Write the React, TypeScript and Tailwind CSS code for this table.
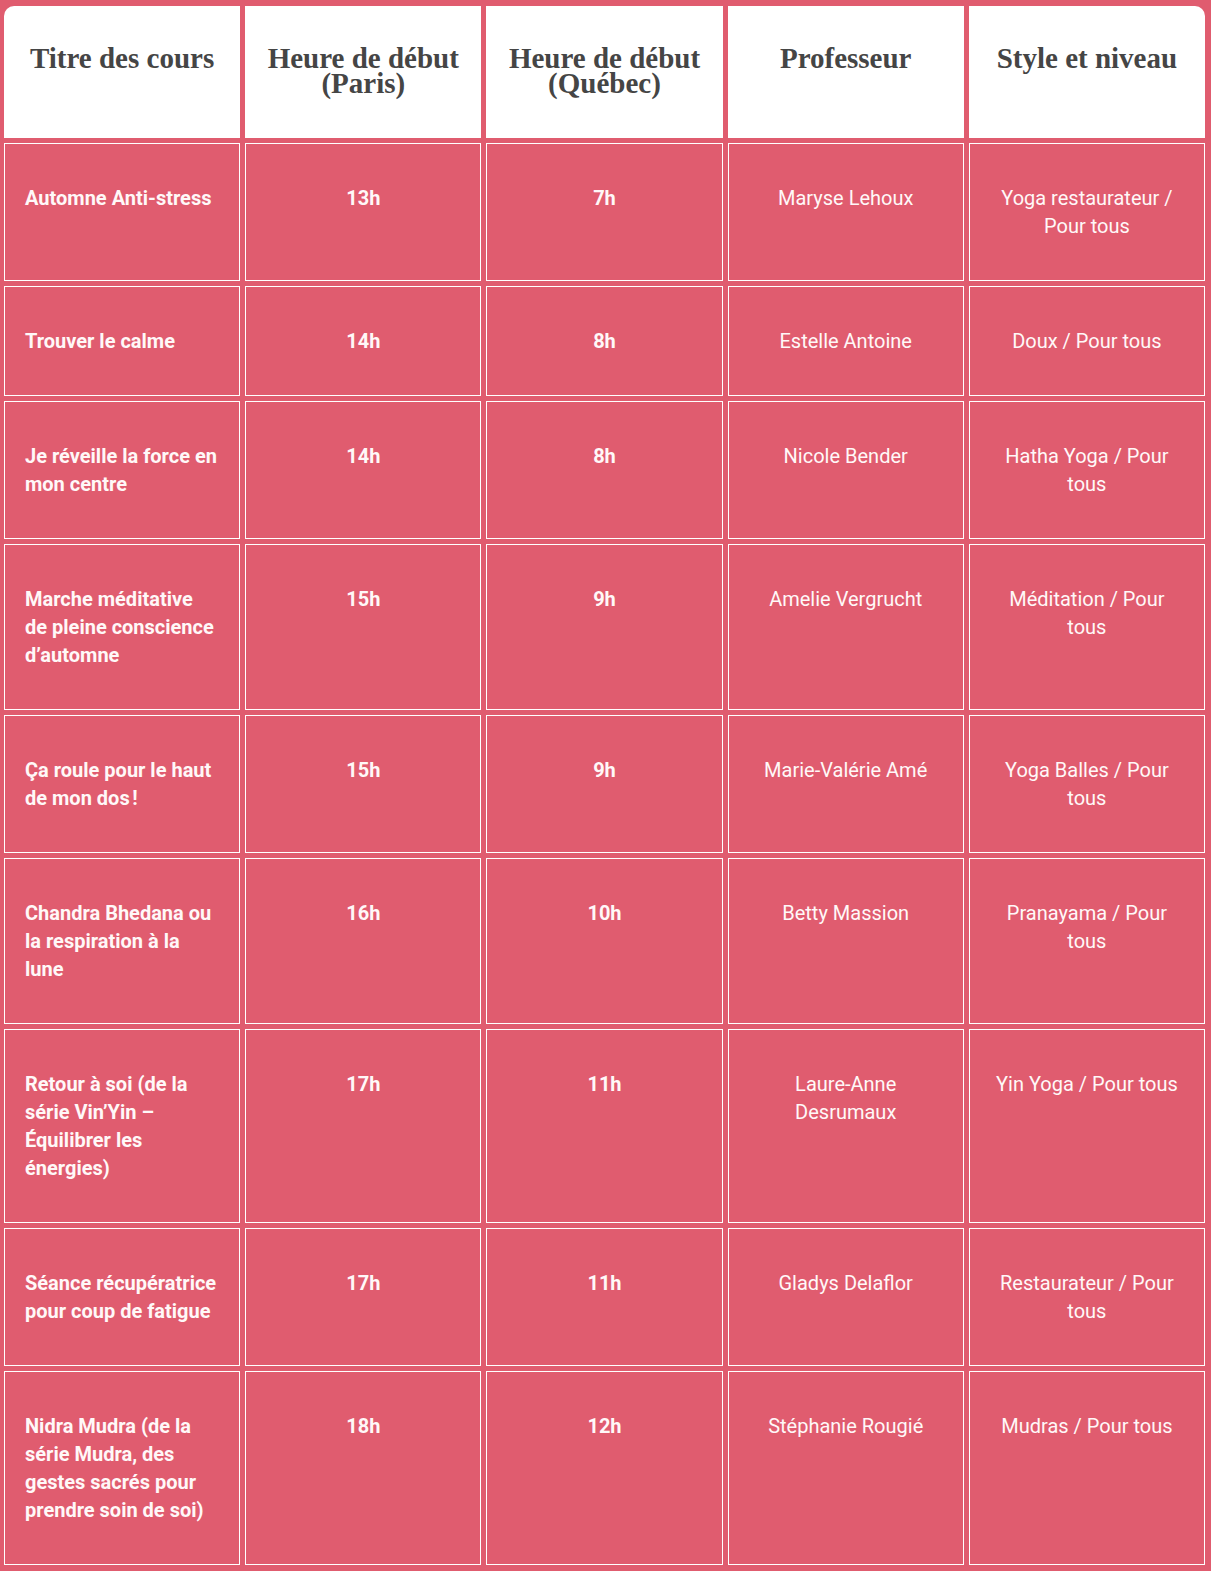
import React from "react";

const headers = [
  "Titre des cours",
  "Heure de début (Paris)",
  "Heure de début (Québec)",
  "Professeur",
  "Style et niveau",
];

const rows = [
  ["Automne Anti-stress", "13h", "7h", "Maryse Lehoux", "Yoga restaurateur / Pour tous"],
  ["Trouver le calme", "14h", "8h", "Estelle Antoine", "Doux / Pour tous"],
  ["Je réveille la force en mon centre", "14h", "8h", "Nicole Bender", "Hatha Yoga / Pour tous"],
  ["Marche méditative de pleine conscience d’automne", "15h", "9h", "Amelie Vergrucht", "Méditation / Pour tous"],
  ["Ça roule pour le haut de mon dos\u202f!", "15h", "9h", "Marie-Valérie Amé", "Yoga Balles / Pour tous"],
  ["Chandra Bhedana ou la respiration à la lune", "16h", "10h", "Betty Massion", "Pranayama / Pour tous"],
  ["Retour à soi (de la série Vin’Yin – Équilibrer les énergies)", "17h", "11h", "Laure-Anne Desrumaux", "Yin Yoga / Pour tous"],
  ["Séance récupératrice pour coup de fatigue", "17h", "11h", "Gladys Delaflor", "Restaurateur / Pour tous"],
  ["Nidra Mudra (de la série Mudra, des gestes sacrés pour prendre soin de soi)", "18h", "12h", "Stéphanie Rougié", "Mudras / Pour tous"],
];

export default function App() {
  return (
    <div className="min-h-screen bg-[#e05c6f] pt-[6px] pl-[4px] pr-[6px] pb-[6px]">
      <div className="grid grid-cols-5 gap-[5px]">
        {headers.map((h, i) => (
          <div
            key={h}
            className={`bg-white h-[132px] px-3 pt-[40px] text-center text-[29px] leading-[25px] font-bold text-[#454545] font-['Liberation_Serif',serif] ${
              i === 0 ? "rounded-tl-[10px]" : ""
            } ${i === 4 ? "rounded-tr-[10px]" : ""}`}
          >
            {h}
          </div>
        ))}
        {rows.map((row, r) =>
          row.map((cell, c) => (
            <div
              key={`${r}-${c}`}
              className={`border border-white py-[40px] px-[20px] text-[20px] leading-[28px] text-[#fff8f8] font-['Roboto',sans-serif] ${
                c === 0 ? "text-left font-bold" : "text-center"
              } ${c === 1 || c === 2 ? "font-bold" : ""}`}
            >
              {cell}
            </div>
          ))
        )}
      </div>
    </div>
  );
}
